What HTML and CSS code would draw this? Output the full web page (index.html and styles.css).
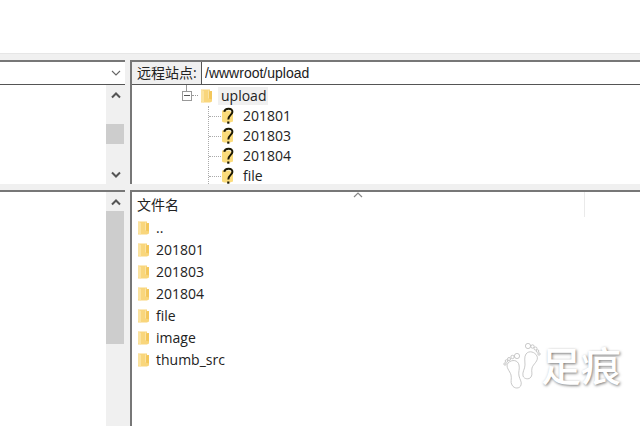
FILE: index.html
```
<!DOCTYPE html>
<html lang="zh-CN">
<head>
  <meta charset="UTF-8">
  <meta name="viewport" content="width=device-width, initial-scale=1.0">
  <title>远程站点</title>
  <link rel="stylesheet" href="styles.css">
</head>
<body>

  <svg class="defs" width="0" height="0" aria-hidden="true">
    <defs>
      <symbol id="folder" viewBox="0 0 14 16">
        <path d="M1 1.500h9v1.500h2v10.500l-2 1H1z" fill="#f9d67c"/>
        <path d="M1 1.500l3 1.500v11.500L1 13.500z" fill="#fbe3a0"/>
        <path d="M8.500 3.500v7l3.500 1V3z" fill="#f3c75c"/>
        <path d="M8.500 2.500v8" stroke="#fbe9b4" stroke-width=".8"/>
      </symbol>
      <symbol id="unknown" viewBox="0 0 14 18">
        <path d="M1 3.500h8v1h3v10l-3 1H3l-2-1z" fill="#fbdc7c"/>
        <path d="M3.200 4.800C4 .6 11.800 .6 11.400 5c-.2 2.800-4 3.300-4.100 7.500" fill="none" stroke="#1c1804" stroke-width="2"/>
        <path d="M6.200 14.500h2.200v2.200H6.200z" fill="#1c1804"/>
      </symbol>
      <symbol id="up" viewBox="0 0 10 8">
        <path d="M1 6.500l4-4 4 4" fill="none" stroke="#555" stroke-width="2"/>
      </symbol>
      <symbol id="down" viewBox="0 0 10 8">
        <path d="M1 1.500l4 4 4-4" fill="none" stroke="#555" stroke-width="2"/>
      </symbol>
    </defs>
  </svg>

  <div class="log"></div>

  <main class="panes">
    <section class="pane local-tree">
      <div class="path-bar">
        <select class="local-path" aria-label="本地站点"><option></option></select>
        <svg class="select-arrow" width="10" height="8" viewBox="0 0 10 8"><path d="M1 2l4 4 4-4" fill="none" stroke="#666" stroke-width="1.1"/></svg>
      </div>
      <div class="scrollbar">
        <button aria-label="向上"><svg width="10" height="8"><use href="#up"/></svg></button>
        <div class="track"><div class="thumb thumb-small"></div></div>
        <button aria-label="向下"><svg width="10" height="8"><use href="#down"/></svg></button>
      </div>
    </section>

    <section class="pane remote-tree">
      <div class="path-bar">
        <label for="remote-path">远程站点:</label>
        <input type="text" id="remote-path" value="/wwwroot/upload">
      </div>
      <div class="tree">
        <div class="tree-row">
          <button class="expander" aria-label="折叠"></button>
          <span class="branch"></span>
          <svg class="folder" width="14" height="16"><use href="#folder"/></svg>
          <span class="selected">upload</span>
        </div>
        <ul class="children">
          <li><svg width="14" height="18"><use href="#unknown"/></svg>201801</li>
          <li><svg width="14" height="18"><use href="#unknown"/></svg>201803</li>
          <li><svg width="14" height="18"><use href="#unknown"/></svg>201804</li>
          <li><svg width="14" height="18"><use href="#unknown"/></svg>file</li>
        </ul>
      </div>
    </section>

    <section class="pane local-files">
      <div class="scrollbar">
        <button aria-label="向上"><svg width="10" height="8"><use href="#up"/></svg></button>
        <div class="track"><div class="thumb thumb-large"></div></div>
      </div>
    </section>

    <section class="pane remote-files">
      <table>
        <thead>
          <tr>
            <th class="name-col">文件名<svg class="sort" width="10" height="6" viewBox="0 0 10 6"><path d="M1 5l4-4 4 4" fill="none" stroke="#888" stroke-width="1.2"/></svg></th>
            <th></th>
          </tr>
        </thead>
        <tbody>
          <tr><td colspan="2"><div class="file"><svg width="14" height="16"><use href="#folder"/></svg>..</div></td></tr>
          <tr><td colspan="2"><div class="file"><svg width="14" height="16"><use href="#folder"/></svg>201801</div></td></tr>
          <tr><td colspan="2"><div class="file"><svg width="14" height="16"><use href="#folder"/></svg>201803</div></td></tr>
          <tr><td colspan="2"><div class="file"><svg width="14" height="16"><use href="#folder"/></svg>201804</div></td></tr>
          <tr><td colspan="2"><div class="file"><svg width="14" height="16"><use href="#folder"/></svg>file</div></td></tr>
          <tr><td colspan="2"><div class="file"><svg width="14" height="16"><use href="#folder"/></svg>image</div></td></tr>
          <tr><td colspan="2"><div class="file"><svg width="14" height="16"><use href="#folder"/></svg>thumb_src</div></td></tr>
        </tbody>
      </table>
    </section>
  </main>

  <div class="watermark">
    <svg width="38" height="50" viewBox="0 0 38 50" fill="#fff" stroke="#bbb" stroke-width=".8">
      <path d="M5 22c4-4 10-3 11 2 1 4-1 7 0 11 1 4 3 6 2 9-1 4-7 4-9 0-2-3 0-6-1-10-1-4-6-8-3-12z"/>
      <circle cx="14" cy="15" r="2.6"/>
      <circle cx="9.500" cy="16" r="1.700"/>
      <circle cx="6" cy="18" r="1.500"/>
      <circle cx="3.500" cy="20" r="1.300"/>
      <circle cx="2" cy="23" r="1.200"/>
      <path d="M23 13c3-4 9-2 11 2 2 5-4 8-5 12-1 4 1 6-1 9-2 3-7 2-8-1-1-4 2-7 2-11 0-4-1-8 1-11z"/>
      <circle cx="25" cy="5" r="2.600"/>
      <circle cx="29.500" cy="5.500" r="1.700"/>
      <circle cx="32.500" cy="7.500" r="1.500"/>
      <circle cx="34.500" cy="10" r="1.300"/>
      <circle cx="36" cy="13" r="1.200"/>
    </svg>
    <span>足痕</span>
  </div>

</body>
</html>
```
FILE: styles.css
```
* {
  margin: 0;
  padding: 0;
  box-sizing: border-box;
}

body {
  display: flex;
  flex-direction: column;
  min-height: 100vh;
  background-color: #f0f0f0;
  color: #222;
  font-family: "Open Sans", "Noto Sans CJK SC", sans-serif;
  font-size: 14px;
  line-height: 20px;
}

button,
input,
select {
  font: inherit;
  color: inherit;
  border: none;
}

.defs {
  position: absolute;
}

.log {
  height: 54px;
  background-color: #fff;
  border-bottom: 1px solid #e6e6e6;
}

.panes {
  flex: 1;
  display: grid;
  grid-template-columns: 125px 1fr;
  grid-template-rows: 124px 1fr;
  gap: 6px 5px;
  padding-top: 6px;
}

.pane {
  display: flex;
  flex-direction: column;
  min-width: 0;
  overflow: hidden;
  background-color: #fff;
  border-top: 2px solid #777;
}

.remote-tree,
.remote-files {
  border-left: 2px solid #777;
}

.path-bar {
  position: relative;
  flex: none;
  display: flex;
  height: 23px;
  border-bottom: 1px solid #555;
}

.local-path {
  width: 100%;
  background-color: #fff;
  appearance: none;
}

.select-arrow {
  position: absolute;
  right: 4px;
  top: 7px;
  pointer-events: none;
}

.path-bar label {
  width: 70px;
  padding-left: 5px;
  background-color: #f0f0f0;
  border-right: 1px solid #555;
  line-height: 22px;
  white-space: nowrap;
}

.path-bar input {
  flex: 1;
  min-width: 0;
  padding-left: 3px;
  background-color: #fff;
  font-family: "Liberation Sans", sans-serif;
}

/* scrollbars */
.scrollbar {
  flex: 1;
  align-self: flex-end;
  display: flex;
  flex-direction: column;
  width: 19px;
  background-color: #f0f0f0;
}

.scrollbar button {
  display: flex;
  align-items: center;
  justify-content: center;
  height: 19px;
  background-color: #f0f0f0;
}

.track {
  flex: 1;
}

.thumb {
  width: 18px;
  background-color: #cdcdcd;
}

.thumb-small {
  height: 20px;
  margin-top: 20px;
}

.thumb-large {
  height: 133px;
}

/* remote tree */
.tree {
  padding-left: 50px;
}

.tree-row {
  display: flex;
  align-items: center;
  height: 21px;
  background: linear-gradient(#999, #999) 4px 0 / 1px 6px no-repeat;
}

.expander {
  width: 10px;
  height: 10px;
  background: linear-gradient(#555, #555) center / 6px 1px no-repeat #fff;
  border: 1px solid #999;
}

.branch {
  width: 6px;
  border-top: 1px dotted #999;
}

.tree-row .folder {
  margin: 0 4px 0 2px;
}

.selected {
  padding: 0 2px 0 3px;
  line-height: 18px;
  background-color: #f0f0f0;
}

.children {
  margin-left: 26px;
  list-style: none;
  border-left: 1px dotted #aaa;
}

.children li {
  display: flex;
  align-items: center;
  gap: 8px;
  height: 20px;
}

.children li::before {
  content: "";
  width: 12px;
  margin-right: -8px;
  border-top: 1px dotted #aaa;
}

/* remote file list */
table {
  width: 100%;
  border-collapse: collapse;
  table-layout: fixed;
}

th {
  position: relative;
  height: 25px;
  padding-left: 5px;
  font-weight: normal;
  text-align: left;
}

.name-col {
  width: 89%;
  border-right: 1px solid #eaeaea;
}

.sort {
  position: absolute;
  left: 49%;
  top: 0;
}

.file {
  display: flex;
  align-items: center;
  gap: 5px;
  height: 22px;
  padding-left: 5px;
}

.watermark {
  position: absolute;
  right: 19px;
  bottom: 35px;
  display: flex;
  align-items: center;
  color: #fff;
  font-size: 40px;
  font-weight: 500;
  line-height: 50px;
  text-shadow: 1px 1px 3px #777;
}
```
